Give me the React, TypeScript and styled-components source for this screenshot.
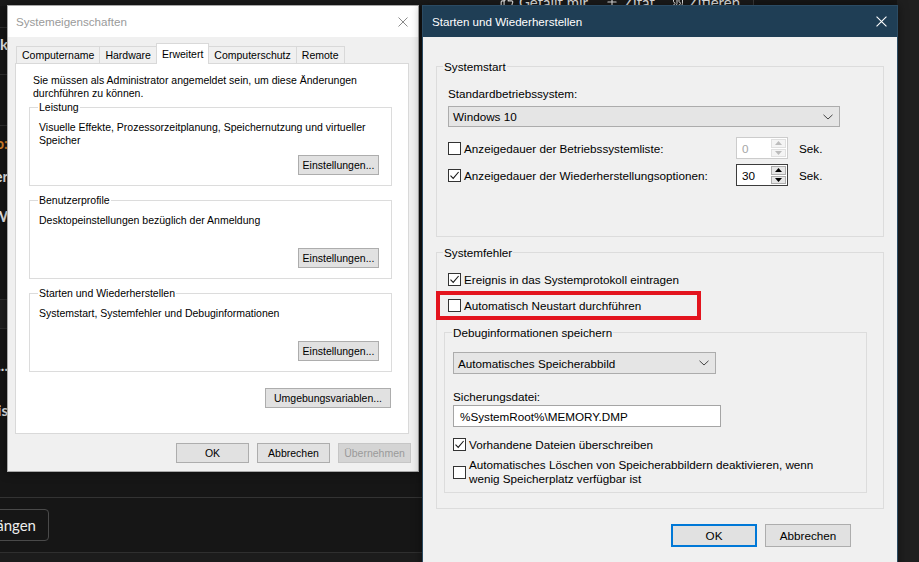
import styled, { createGlobalStyle, css } from "styled-components";
import { ThumbsUp, Plus, Quote } from "lucide-react";

const UI_FONT = `"Liberation Sans", Arial, sans-serif`;
const WEB_FONT = `Lato, "Open Sans", sans-serif`;

const GlobalStyle = createGlobalStyle`
  * { box-sizing: border-box; }
  html, body { margin: 0; padding: 0; background: #161616; }
  body { font-family: ${UI_FONT}; color: #000; }
`;

/* ---------- forum page behind the dialogs ---------- */

const Desktop = styled.div`
  position: relative;
  width: 919px;
  height: 562px;
  overflow: hidden;
  display: flex;
  background: #161616;
  font-family: ${WEB_FONT};
`;

const Page = styled.div`
  flex: 1;
  min-width: 0;
  display: flex;
  flex-direction: column;
`;

const RightRail = styled.div`
  width: 22px;
  flex: none;
  background: #1f1f1f;
`;

const PostActions = styled.div`
  height: 6px;
  width: 754px;
  flex: none;
  display: flex;
  justify-content: flex-end;
  align-items: flex-end;
  gap: 17px;
  padding-right: 13px;
  border-right: 1px solid #3a3a3a;
  background: #1b1b1b;
  overflow: hidden;
`;

const Action = styled.span`
  display: flex;
  align-items: center;
  gap: 5px;
  height: 16px;
  margin-bottom: -4px;
  color: #e6e6e6;
  font-size: 15px;
  line-height: 16px;
  white-space: nowrap;
`;

const PostBody = styled.div`
  height: 491px;
  flex: none;
  display: flex;
`;

const Gutter = styled.div`
  width: 8px;
  display: flex;
  flex-direction: column;
`;

const GutterRow = styled.div<{ $h: number; $line?: boolean; $band?: boolean; $color?: string }>`
  height: ${(p) => p.$h}px;
  flex: none;
  display: flex;
  justify-content: flex-end;
  align-items: center;
  white-space: nowrap;
  font-size: 15px;
  font-weight: 700;
  color: ${(p) => p.$color ?? "#e8e8e8"};
  background: ${(p) => (p.$band ? "#1e1e1e" : "transparent")};
  border-bottom: ${(p) => (p.$line ? "1px solid #2e2e2e" : "none")};
`;

const ReplyBar = styled.div`
  height: 55px;
  flex: none;
  display: flex;
  align-items: center;
  border-top: 1px solid #333;
  background: #161616;
`;

const ReplySlot = styled.div`
  width: 49px;
  display: flex;
  justify-content: flex-end;
`;

const ReplyButton = styled.div`
  height: 32px;
  padding: 0 12px;
  display: flex;
  align-items: center;
  flex: none;
  white-space: nowrap;
  border: 1px solid #4a4a4a;
  border-radius: 4px;
  color: #ededed;
  font-size: 15px;
`;

const Footer = styled.div`
  flex: 1;
  border-top: 1px solid #2f2f2f;
  background: #1c1c1c;
`;

/* ---------- windows ---------- */

const Window = styled.section<{ $active?: boolean }>`
  position: absolute;
  display: flex;
  flex-direction: column;
  background: #f0f0f0;
  border: 1px solid ${(p) => (p.$active ? "#2b4b63" : "#a8a8a8")};
  box-shadow: 0 0 10px rgba(0, 0, 0, 0.45);
  font-family: ${UI_FONT};
  color: #000;
`;

const SystemWindow = styled(Window)`
  left: 7px;
  top: 5px;
  width: 412px;
  height: 467px;
  font-size: 10.5px;
  line-height: 13px;
`;

const RecoveryWindow = styled(Window)`
  left: 422px;
  top: 5px;
  width: 476px;
  height: 575px;
  font-size: 11.7px;
  line-height: 15px;
`;

const TitleBar = styled.header<{ $active?: boolean }>`
  height: 31px;
  flex: none;
  display: flex;
  align-items: center;
  justify-content: space-between;
  padding: 0 10px 0 ${(p) => (p.$active ? 9 : 8)}px;
  background: ${(p) => (p.$active ? "#1f3e55" : "#fff")};
  color: ${(p) => (p.$active ? "#fff" : "#9a9a9a")};
  font-size: 11.6px;
`;

const SystemBody = styled.div`
  flex: 1;
  display: flex;
  flex-direction: column;
  padding: 6px 9px 8px 7px;
`;

const TabStrip = styled.div`
  height: 20px;
  flex: none;
  display: flex;
  align-items: flex-end;
  padding-left: 2px;
`;

const Tab = styled.div<{ $selected?: boolean }>`
  position: relative;
  z-index: ${(p) => (p.$selected ? 1 : 0)};
  height: ${(p) => (p.$selected ? 21 : 17)}px;
  margin: 0 0 ${(p) => (p.$selected ? -1 : 0)}px -1px;
  padding: 0 5px;
  display: flex;
  align-items: center;
  white-space: nowrap;
  border: 1px solid #d9d9d9;
  border-bottom: none;
  background: ${(p) => (p.$selected ? "#fff" : "#f0f0f0")};
`;

const TabPanel = styled.div`
  flex: 1;
  display: flex;
  flex-direction: column;
  background: #fff;
  border: 1px solid #d9d9d9;
  padding: 10px 16px 0 13px;
`;

const Intro = styled.p`
  margin: 0 0 1px 4px;
`;

const Group = styled.fieldset<{ $mt?: number }>`
  margin: ${(p) => p.$mt ?? 0}px 0 0;
  padding: 0;
  min-width: 0;
  border: 1px solid #dcdcdc;
`;

const GroupTitle = styled.legend<{ $inset: number }>`
  margin-left: ${(p) => p.$inset}px;
  padding: 0 1px;
`;

const SettingsBody = styled.div`
  height: 71px;
  display: flex;
  flex-direction: column;
  padding: 7px 12px 10px 9px;
`;

const Button = styled.button<{ $w: number; $h?: number; $default?: boolean }>`
  width: ${(p) => p.$w}px;
  height: ${(p) => p.$h ?? 20}px;
  flex: none;
  padding: 0;
  font: inherit;
  color: #000;
  background: #e1e1e1;
  border: 1px solid #adadad;
  ${(p) =>
    p.$default &&
    css`
      border: 2px solid #0078d7;
    `}
  &:disabled {
    background: #d4d4d4;
    border-color: #c6c6c6;
    color: #9a9a9a;
  }
`;

const PushRight = styled(Button)`
  align-self: flex-end;
  margin-top: auto;
`;

const EnvButton = styled(Button)`
  align-self: flex-end;
  margin: 16px 1px 0 0;
`;

const ButtonRow = styled.div<{ $mt: number; $pr: number; $mr?: number }>`
  display: flex;
  justify-content: flex-end;
  gap: 8px;
  margin-top: ${(p) => p.$mt}px;
  margin-right: ${(p) => p.$mr ?? 0}px;
  padding-right: ${(p) => p.$pr}px;
`;

/* ---------- recovery dialog ---------- */

const RecoveryBody = styled.div`
  flex: 1;
  display: flex;
  flex-direction: column;
  padding: 22px 13px 0;
`;

const StartupBody = styled.div`
  padding: 12px 43px 50px 11px;
  display: flex;
  flex-direction: column;
`;

const Select = styled.div<{ $w: number; $h: number; $mt: number }>`
  width: ${(p) => p.$w}px;
  height: ${(p) => p.$h}px;
  margin-top: ${(p) => p.$mt}px;
  display: flex;
  align-items: center;
  justify-content: space-between;
  padding: 0 6px 0 4px;
  background: #e5e5e5;
  border: 1px solid #acacac;
`;

const TimeoutGrid = styled.div`
  display: grid;
  grid-template-columns: 288px 52px auto;
  grid-auto-rows: 22px;
  row-gap: 5px;
  align-items: center;
  margin-top: 10px;
`;

const Unit = styled.span`
  margin-left: 11px;
`;

const Spin = styled.div<{ $disabled?: boolean }>`
  height: 22px;
  display: flex;
  border: 1px solid ${(p) => (p.$disabled ? "#cccccc" : "#3c3c3c")};
  background: #fff;
  color: ${(p) => (p.$disabled ? "#a6a6a6" : "#000")};
`;

const SpinValue = styled.span`
  flex: 1;
  display: flex;
  align-items: center;
  padding-left: 5px;
`;

const SpinArrows = styled.div`
  width: 16px;
  display: flex;
  flex-direction: column;
  gap: 1px;
  padding: 1px 1px 1px 0;
`;

const SpinArrow = styled.span<{ $disabled?: boolean }>`
  flex: 1;
  display: flex;
  align-items: center;
  justify-content: center;
  background: ${(p) => (p.$disabled ? "#f4f4f4" : "#e6e6e6")};
  border: 1px solid ${(p) => (p.$disabled ? "#e0e0e0" : "#adadad")};
  color: ${(p) => (p.$disabled ? "#bcbcbc" : "#000")};
`;

const ErrorBody = styled.div`
  padding: 12px 16px 15px 7px;
  display: flex;
  flex-direction: column;
`;

const Check = styled.label<{ $mt?: number; $ml?: number; $lh?: number }>`
  position: relative;
  display: flex;
  align-items: center;
  gap: 3px;
  white-space: nowrap;
  margin-top: ${(p) => p.$mt ?? 0}px;
  margin-left: ${(p) => p.$ml ?? 0}px;
  line-height: ${(p) => p.$lh ?? 15}px;
`;

const Box = styled.span`
  width: 13px;
  height: 13px;
  flex: none;
  display: flex;
  align-items: center;
  justify-content: center;
  border: 1px solid #333;
  background: #fff;
`;

const Marker = styled.span`
  position: absolute;
  left: -12px;
  top: -7px;
  width: 265px;
  height: 29px;
  border: 4px solid #e3141e;
  pointer-events: none;
`;

const DebugBody = styled.div`
  padding: 12px 10px 6px 8px;
  display: flex;
  flex-direction: column;
`;

const FieldLabel = styled.div`
  margin-top: 15px;
`;

const TextField = styled.div`
  width: 268px;
  height: 22px;
  margin-top: 1px;
  display: flex;
  align-items: center;
  padding-left: 6px;
  background: #fff;
  border: 1px solid #a5a5a5;
`;

/* ---------- small drawings ---------- */

const CloseIcon = ({ color, size }: { color: string; size: number }) => (
  <svg width={size} height={size} viewBox="0 0 10 10">
    <path d="M0.5 0.5L9.5 9.5M9.5 0.5L0.5 9.5" stroke={color} strokeWidth="1" fill="none" />
  </svg>
);

const Chevron = () => (
  <svg width="10" height="6" viewBox="0 0 10 6">
    <polyline points="0.5,0.8 5,5 9.5,0.8" stroke="#444" strokeWidth="1" fill="none" />
  </svg>
);

const Arrow = ({ up }: { up?: boolean }) => (
  <svg width="7" height="4" viewBox="0 0 7 4">
    <polygon points={up ? "0,4 3.5,0 7,4" : "0,0 7,0 3.5,4"} fill="currentColor" />
  </svg>
);

const CheckBox = ({ checked }: { checked?: boolean }) => (
  <Box>
    {checked && (
      <svg width="11" height="11" viewBox="0 0 11 11">
        <polyline points="1.5,5.6 4.2,8.4 9.6,2" stroke="#1a1a1a" strokeWidth="1.1" fill="none" />
      </svg>
    )}
  </Box>
);

const SpinBox = ({ value, disabled }: { value: string; disabled?: boolean }) => (
  <Spin $disabled={disabled}>
    <SpinValue>{value}</SpinValue>
    <SpinArrows>
      <SpinArrow $disabled={disabled}>
        <Arrow up />
      </SpinArrow>
      <SpinArrow $disabled={disabled}>
        <Arrow />
      </SpinArrow>
    </SpinArrows>
  </Spin>
);

const settingsGroups = [
  {
    title: "Leistung",
    text: ["Visuelle Effekte, Prozessorzeitplanung, Speichernutzung und virtueller", "Speicher"],
  },
  { title: "Benutzerprofile", text: ["Desktopeinstellungen bezüglich der Anmeldung"] },
  { title: "Starten und Wiederherstellen", text: ["Systemstart, Systemfehler und Debuginformationen"] },
];

const tabs = ["Computername", "Hardware", "Erweitert", "Computerschutz", "Remote"];

const App = () => {
  return (
    <>
      <GlobalStyle />
      <Desktop>
        <Page>
          <PostActions>
            <Action>
              <ThumbsUp size={14} />
              Gefällt mir
            </Action>
            <Action>
              <Plus size={14} />
              Zitat
            </Action>
            <Action>
              <Quote size={12} />
              Zitieren
            </Action>
          </PostActions>
          <PostBody>
            <Gutter>
              <GutterRow $h={22} $line />
              <GutterRow $h={32}>Grafik</GutterRow>
              <GutterRow $h={15} $line />
              <GutterRow $h={51} $line />
              <GutterRow $h={34} $color="#d4802a">Info:</GutterRow>
              <GutterRow $h={32}>Mitglieder</GutterRow>
              <GutterRow $h={48}>BSOD W</GutterRow>
              <GutterRow $h={60} $line />
              <GutterRow $h={29} $band $line />
              <GutterRow $h={11} />
              <GutterRow $h={50}>...</GutterRow>
              <GutterRow $h={40}>Antwort: Was is</GutterRow>
              <GutterRow $h={67} />
            </Gutter>
          </PostBody>
          <ReplyBar>
            <ReplySlot>
              <ReplyButton>Dateien anhängen</ReplyButton>
            </ReplySlot>
          </ReplyBar>
          <Footer />
        </Page>
        <RightRail />

        <SystemWindow>
          <TitleBar>
            <span>Systemeigenschaften</span>
            <CloseIcon color="#8a8a8a" size={10} />
          </TitleBar>
          <SystemBody>
            <TabStrip>
              {tabs.map((t) => (
                <Tab key={t} $selected={t === "Erweitert"}>
                  {t}
                </Tab>
              ))}
            </TabStrip>
            <TabPanel>
              <Intro>
                Sie müssen als Administrator angemeldet sein, um diese Änderungen
                <br />
                durchführen zu können.
              </Intro>
              {settingsGroups.map((g, i) => (
                <Group key={g.title} $mt={i === 0 ? 0 : 8}>
                  <GroupTitle $inset={8}>{g.title}</GroupTitle>
                  <SettingsBody>
                    {g.text.map((line) => (
                      <span key={line}>{line}</span>
                    ))}
                    <PushRight $w={81}>Einstellungen...</PushRight>
                  </SettingsBody>
                </Group>
              ))}
              <EnvButton $w={126}>Umgebungsvariablen...</EnvButton>
            </TabPanel>
            <ButtonRow $mt={9} $pr={0} $mr={-2}>
              <Button $w={73}>OK</Button>
              <Button $w={73}>Abbrechen</Button>
              <Button $w={73} disabled>
                Übernehmen
              </Button>
            </ButtonRow>
          </SystemBody>
        </SystemWindow>

        <RecoveryWindow $active>
          <TitleBar $active>
            <span>Starten und Wiederherstellen</span>
            <CloseIcon color="#ffffff" size={11} />
          </TitleBar>
          <RecoveryBody>
            <Group>
              <GroupTitle $inset={6}>Systemstart</GroupTitle>
              <StartupBody>
                <span>Standardbetriebssystem:</span>
                <Select $w={392} $h={21} $mt={5}>
                  <span>Windows 10</span>
                  <Chevron />
                </Select>
                <TimeoutGrid>
                  <Check>
                    <CheckBox />
                    Anzeigedauer der Betriebssystemliste:
                  </Check>
                  <SpinBox value="0" disabled />
                  <Unit>Sek.</Unit>
                  <Check>
                    <CheckBox checked />
                    Anzeigedauer der Wiederherstellungsoptionen:
                  </Check>
                  <SpinBox value="30" />
                  <Unit>Sek.</Unit>
                </TimeoutGrid>
              </StartupBody>
            </Group>

            <Group $mt={8}>
              <GroupTitle $inset={6}>Systemfehler</GroupTitle>
              <ErrorBody>
                <Check $ml={4}>
                  <CheckBox checked />
                  Ereignis in das Systemprotokoll eintragen
                </Check>
                <Check $ml={4} $mt={11}>
                  <CheckBox />
                  Automatisch Neustart durchführen
                  <Marker />
                </Check>
                <Group $mt={12}>
                  <GroupTitle $inset={7}>Debuginformationen speichern</GroupTitle>
                  <DebugBody>
                    <Select $w={263} $h={22} $mt={0}>
                      <span>Automatisches Speicherabbild</span>
                      <Chevron />
                    </Select>
                    <FieldLabel>Sicherungsdatei:</FieldLabel>
                    <TextField>{"%SystemRoot%\\MEMORY.DMP"}</TextField>
                    <Check $mt={10}>
                      <CheckBox checked />
                      Vorhandene Dateien überschreiben
                    </Check>
                    <Check $mt={6} $lh={14}>
                      <CheckBox />
                      <span>
                        Automatisches Löschen von Speicherabbildern deaktivieren, wenn
                        <br />
                        wenig Speicherplatz verfügbar ist
                      </span>
                    </Check>
                  </DebugBody>
                </Group>
              </ErrorBody>
            </Group>

            <ButtonRow $mt={15} $pr={33}>
              <Button $w={86} $h={23} $default>
                OK
              </Button>
              <Button $w={86} $h={23}>
                Abbrechen
              </Button>
            </ButtonRow>
          </RecoveryBody>
        </RecoveryWindow>
      </Desktop>
    </>
  );
};

export default App;
